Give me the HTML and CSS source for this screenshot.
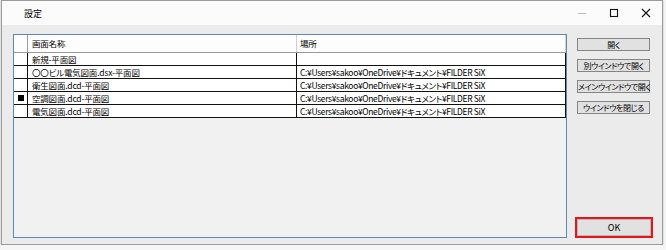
FILE: index.html
```html
<!DOCTYPE html>
<html lang="ja">
<head>
  <meta charset="UTF-8" />
  <title>設定</title>
  <link rel="stylesheet" href="styles.css">
</head>
<body>
  <div class="window">
    <div class="titlebar">
      <span class="title">設定</span>
      <div class="caption">
        <span class="cap cap-min">
          <svg width="10" height="10" viewBox="0 0 10 10"><path d="M1 5.5H9" stroke="#bdbdbd" stroke-width="1"/></svg>
        </span>
        <span class="cap">
          <svg width="10" height="10" viewBox="0 0 10 10"><rect x="1.5" y="1.5" width="7" height="7" fill="none" stroke="#111" stroke-width="1.1"/></svg>
        </span>
        <span class="cap">
          <svg width="10" height="10" viewBox="0 0 10 10"><path d="M1 1L9 9M9 1L1 9" stroke="#111" stroke-width="1.1"/></svg>
        </span>
      </div>
    </div>

    <div class="content">
      <div class="grid">
        <div class="row head">
          <div class="cell mark"></div>
          <div class="cell name">画面名称</div>
          <div class="cell path">場所</div>
        </div>
        <div class="row">
          <div class="cell mark"></div>
          <div class="cell name">新規-平面図</div>
          <div class="cell path"></div>
        </div>
        <div class="row">
          <div class="cell mark"></div>
          <div class="cell name">〇〇ビル電気図面.dsx-平面図</div>
          <div class="cell path">C:¥Users¥sakoo¥OneDrive¥ドキュメント¥FILDER SiX</div>
        </div>
        <div class="row">
          <div class="cell mark"></div>
          <div class="cell name">衛生図面.dcd-平面図</div>
          <div class="cell path">C:¥Users¥sakoo¥OneDrive¥ドキュメント¥FILDER SiX</div>
        </div>
        <div class="row">
          <div class="cell mark"><span class="current"></span></div>
          <div class="cell name">空調図面.dcd-平面図</div>
          <div class="cell path">C:¥Users¥sakoo¥OneDrive¥ドキュメント¥FILDER SiX</div>
        </div>
        <div class="row">
          <div class="cell mark"></div>
          <div class="cell name">電気図面.dcd-平面図</div>
          <div class="cell path">C:¥Users¥sakoo¥OneDrive¥ドキュメント¥FILDER SiX</div>
        </div>
      </div>

      <div class="side">
        <div class="actions">
          <button class="btn">開く</button>
          <button class="btn">別ウインドウで開く</button>
          <button class="btn">メインウインドウで開く</button>
          <button class="btn">ウインドウを閉じる</button>
        </div>
        <div class="ok-frame">
          <button class="btn ok">OK</button>
        </div>
      </div>
    </div>
  </div>
</body>
</html>
```

FILE: styles.css
```css
* { margin: 0; padding: 0; box-sizing: border-box; }

body {
  background: #f6f6f6;
  padding-left: 1px;
  font-family: "Noto Sans CJK JP", "Noto Sans", sans-serif;
  font-feature-settings: "palt";
  color: #000;
}

.window {
  width: 662px;
  border: 1px solid #9c9c9c;
  background: #ebebeb;
  box-shadow: 0 1px 2px rgba(0, 0, 0, 0.25);
}

.titlebar {
  height: 24px;
  background: #fbfbfb;
  display: flex;
  align-items: center;
  padding-left: 22px;
}

.title {
  font-size: 9px;
  flex: 1;
}

.caption {
  display: flex;
  height: 100%;
}

.cap {
  width: 32px;
  display: flex;
  align-items: center;
  justify-content: center;
}

.content {
  display: flex;
  padding: 9px 0 6px 11px;
}

/* list */
.grid {
  width: 554px;
  height: 204px;
  border: 1px solid #5c88b4;
  background: #f1f1f1;
}

.row {
  display: grid;
  grid-template-columns: 14px 269px 269px;
  height: 13px;
  background: #fff;
  border-bottom: 1px solid #111;
  font-size: 8.5px;
  line-height: 12px;
}

.row.head {
  height: 18px;
  line-height: 17px;
  background: #fdfdfd;
  border-bottom-color: #9a9a9a;
}

.cell {
  border-right: 1px solid #111;
  white-space: nowrap;
  overflow: hidden;
}

.head .cell { border-right-color: #d0d0d0; }
.head .mark { border-right-color: #9a9a9a; }

.name, .path { padding-left: 4px; }
.name { letter-spacing: -0.2px; }
.path { padding-left: 3px; letter-spacing: -0.35px; }

.mark {
  display: flex;
  align-items: center;
  justify-content: center;
}

.current {
  width: 6px;
  height: 6px;
  background: #000;
}

/* buttons */
.side {
  width: 78px;
  margin-left: 8px;
  display: flex;
  flex-direction: column;
  justify-content: space-between;
}

.actions {
  display: flex;
  flex-direction: column;
  gap: 8px;
  margin-top: 4px;
  padding-left: 2px;
}

.btn {
  display: block;
  width: 73px;
  height: 13px;
  padding: 0;
  background: #e1e1e1;
  border: 1px solid #858585;
  font-family: inherit;
  font-feature-settings: "palt";
  font-size: 8px;
  line-height: 11px;
  color: #000;
  white-space: nowrap;
  overflow: visible;
  letter-spacing: -0.4px;
}

.ok-frame {
  border: 2px solid #e8141b;
  width: 78px;
  height: 21px;
}

.btn.ok {
  width: 74px;
  height: 17px;
  border-color: #b9b9b9;
  line-height: 15px;
  font-size: 9px;
  letter-spacing: 0;
}
```
